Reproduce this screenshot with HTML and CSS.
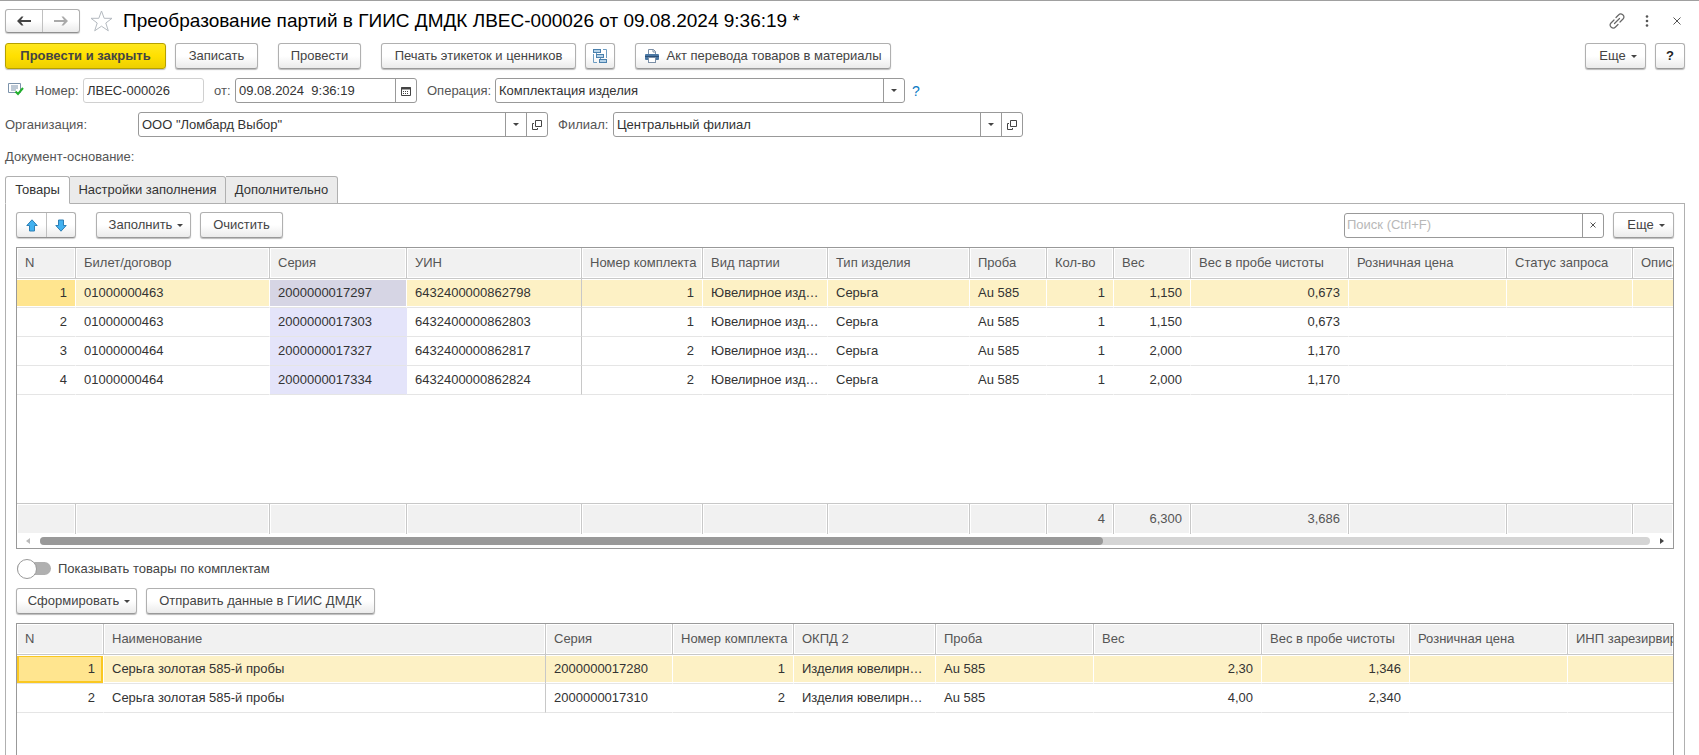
FILE: index.html
```html
<!DOCTYPE html>
<html lang="ru">
<head>
<meta charset="utf-8">
<title>Преобразование партий в ГИИС ДМДК</title>
<link rel="stylesheet" href="styles.css">
</head>
<body>
<div class="window">
  <header class="titlebar">
    <div class="pair">
      <button type="button" class="pair-btn nav" aria-label="Назад"><svg width="14" height="10" viewBox="0 0 14 10"><path d="M0 5 4.500.5H6.500L4 4H14V6H4L6.500 9.500H4.500Z" fill="#444"/></svg></button>
      <button type="button" class="pair-btn nav" aria-label="Вперед"><svg width="14" height="10" viewBox="0 0 14 10"><path d="M14 5 9.500.5H7.500L10 4H0V6H10L7.500 9.500H9.500Z" fill="#aaa"/></svg></button>
    </div>
    <button type="button" class="plain star" aria-label="В избранное"><svg width="23" height="22" viewBox="0 0 23 22"><path d="M11.500 1 14.200 8.300H22L15.800 13 18.300 20.800 11.500 16.200 4.700 20.800 7.200 13 1 8.300H8.800Z" fill="none" stroke="#b4bac0"/></svg></button>
    <h1 class="title">Преобразование партий в ГИИС ДМДК ЛВЕС-000026 от 09.08.2024 9:36:19 *</h1>
    <div class="window-tools">
      <button type="button" class="plain" aria-label="Ссылка"><svg width="16" height="16" viewBox="0 0 16 16" fill="none" stroke="#666" stroke-width="1.200" stroke-linecap="round"><path d="M5.500 10.500l5-5M7 4.500 9.500 2a2.500 2.500 0 0 1 4.500 4L11 9M9 11.500 6.500 14a2.500 2.500 0 0 1-4.500-4L5 7"/></svg></button>
      <button type="button" class="plain" aria-label="Меню"><svg width="4" height="14" viewBox="0 0 4 14" fill="#555"><circle cx="2" cy="2.500" r="1.300"/><circle cx="2" cy="7" r="1.300"/><circle cx="2" cy="11.500" r="1.300"/></svg></button>
      <button type="button" class="plain" aria-label="Закрыть"><svg width="8" height="8" viewBox="0 0 8 8"><path d="M.5.5l7 7M7.500.5l-7 7" stroke="#555"/></svg></button>
    </div>
  </header>

  <div class="commands">
    <button type="button" class="btn primary w-primary">Провести и закрыть</button>
    <button type="button" class="btn w-short">Записать</button>
    <button type="button" class="btn w-short group-start">Провести</button>
    <button type="button" class="btn w-print group-start">Печать этикеток и ценников</button>
    <button type="button" class="btn w-icon" aria-label="Структура подчиненности"><svg width="16" height="16" viewBox="0 0 16 16" fill="#b5d2e8" stroke="#4a80ad"><path d="M11 1.500h3.500V10M5 14.500H1.500V6M4.500 5v3M8.500 10v3" fill="none" stroke="#6d9cc2"/><rect x="1.500" y="1.500" width="7" height="3"/><rect x="4.500" y="6.500" width="7" height="3"/><rect x="7.500" y="11.500" width="7" height="3"/></svg></button>
    <button type="button" class="btn w-act group-start"><svg width="16" height="16" viewBox="0 0 16 16"><path d="M4.500 6.500v-5h5l2 2v3" fill="#fff" stroke="#7b8fa6"/><path d="M9 1.500V4h2.500" fill="none" stroke="#7b8fa6"/><rect x="1" y="6" width="14" height="6" rx="1" fill="#4a77a3"/><path d="M1 8.500h14" stroke="#2a4f78"/><rect x="4.500" y="9.500" width="7" height="5" fill="#fff" stroke="#7b8fa6"/></svg>Акт перевода товаров в материалы</button>
    <div class="right">
      <button type="button" class="btn drop w-more">Еще<i class="caret"></i></button>
      <button type="button" class="btn help w-icon">?</button>
    </div>
  </div>

  <div class="row">
    <svg class="state" width="16" height="14" viewBox="0 0 16 14"><path d="M.5 1.500h12v9H.5Z" fill="#fff" stroke="#7c93ab"/><path d="M3 4h7M3 6h7M3 8h5" stroke="#7c93ab"/><path d="M7.500 9.500 10 12l5-6" fill="none" stroke="#22b02c" stroke-width="2"/></svg>
    <label class="lbl lbl-number" for="num">Номер:</label>
    <span class="field readonly f-number"><input id="num" value="ЛВЕС-000026" readonly></span>
    <label class="lbl lbl-from" for="date">от:</label>
    <span class="field f-date"><input id="date" value="09.08.2024  9:36:19"><button type="button" class="cell" aria-label="Календарь"><svg width="10" height="10" viewBox="0 0 10 10"><path d="M.5 1.500h9v8h-9Z" fill="none" stroke="#444"/><path d="M0 2.500h10" stroke="#444" stroke-width="2"/><path d="M2 5.500h6M2 7.500h6" stroke="#444" stroke-dasharray="1 1"/></svg></button></span>
    <label class="lbl lbl-op" for="op">Операция:</label>
    <span class="field f-wide"><select id="op"><option>Комплектация изделия</option></select><span class="cell"><i class="caret"></i></span></span>
    <a class="hint" href="#">?</a>
  </div>

  <div class="row">
    <label class="lbl lbl-org" for="org">Организация:</label>
    <span class="field f-wide"><select id="org"><option>ООО "Ломбард Выбор"</option></select><span class="cell"><i class="caret"></i></span><button type="button" class="cell" aria-label="Открыть организацию"><svg width="10" height="10" viewBox="0 0 10 10" fill="none" stroke="#444"><path d="M3.500.5h6v6h-6ZM2 3.500H.5v6h5V8"/></svg></button></span>
    <label class="lbl lbl-branch" for="branch">Филиал:</label>
    <span class="field f-wide"><select id="branch"><option>Центральный филиал</option></select><span class="cell"><i class="caret"></i></span><button type="button" class="cell" aria-label="Открыть филиал"><svg width="10" height="10" viewBox="0 0 10 10" fill="none" stroke="#444"><path d="M3.500.5h6v6h-6ZM2 3.500H.5v6h5V8"/></svg></button></span>
  </div>

  <div class="row basis"><span class="lbl">Документ-основание:</span></div>

  <div class="tabs" role="tablist">
    <button type="button" class="tab active" role="tab" aria-selected="true">Товары</button>
    <button type="button" class="tab w-settings" role="tab">Настройки заполнения</button>
    <button type="button" class="tab w-extra" role="tab">Дополнительно</button>
  </div>

  <main class="panel">
    <div class="commands">
      <div class="pair">
        <button type="button" class="pair-btn" aria-label="Вверх"><svg width="12" height="13" viewBox="0 0 12 13"><path d="M6 .8 11.200 6.500H8.500V12h-5V6.500H.8Z" fill="#41b1f0" stroke="#2d7fb5"/></svg></button>
        <button type="button" class="pair-btn" aria-label="Вниз"><svg width="12" height="13" viewBox="0 0 12 13"><path d="M6 12.200 11.200 6.500H8.500V1h-5V6.500H.8Z" fill="#41b1f0" stroke="#2d7fb5"/></svg></button>
      </div>
      <button type="button" class="btn drop w-fill group-start">Заполнить<i class="caret"></i></button>
      <button type="button" class="btn w-short">Очистить</button>
      <div class="right">
        <span class="field f-search"><input aria-label="Поиск" placeholder="Поиск (Ctrl+F)"><button type="button" class="cell" aria-label="Очистить поиск"><svg width="6" height="6" viewBox="0 0 6 6"><path d="M.5.5l5 5M5.500.5l-5 5" stroke="#555"/></svg></button></span>
        <button type="button" class="btn drop w-more">Еще<i class="caret"></i></button>
      </div>
    </div>

    <div class="frame">
      <table class="grid goods">
        <colgroup><col class="c59"><col class="c194"><col class="c137"><col class="c175"><col class="c121"><col class="c125"><col class="c142"><col class="c77"><col class="c67"><col class="c77"><col class="c158"><col class="c158"><col class="c126"><col></colgroup>
        <thead><tr><th>N</th><th>Билет/договор</th><th>Серия</th><th>УИН</th><th>Номер комплекта</th><th>Вид партии</th><th>Тип изделия</th><th>Проба</th><th>Кол-во</th><th>Вес</th><th>Вес в пробе чистоты</th><th>Розничная цена</th><th>Статус запроса</th><th>Описание</th></tr></thead>
        <tbody>
          <tr class="selected"><td class="num current">1</td><td>01000000463</td><td class="series">2000000017297</td><td class="fixed">6432400000862798</td><td class="num">1</td><td>Ювелирное изделие</td><td>Серьга</td><td>Au 585</td><td class="num">1</td><td class="num">1,150</td><td class="num">0,673</td><td></td><td></td><td></td></tr>
          <tr><td class="num">2</td><td>01000000463</td><td class="series">2000000017303</td><td class="fixed">6432400000862803</td><td class="num">1</td><td>Ювелирное изделие</td><td>Серьга</td><td>Au 585</td><td class="num">1</td><td class="num">1,150</td><td class="num">0,673</td><td></td><td></td><td></td></tr>
          <tr><td class="num">3</td><td>01000000464</td><td class="series">2000000017327</td><td class="fixed">6432400000862817</td><td class="num">2</td><td>Ювелирное изделие</td><td>Серьга</td><td>Au 585</td><td class="num">1</td><td class="num">2,000</td><td class="num">1,170</td><td></td><td></td><td></td></tr>
          <tr><td class="num">4</td><td>01000000464</td><td class="series">2000000017334</td><td class="fixed">6432400000862824</td><td class="num">2</td><td>Ювелирное изделие</td><td>Серьга</td><td>Au 585</td><td class="num">1</td><td class="num">2,000</td><td class="num">1,170</td><td></td><td></td><td></td></tr>
          <tr class="filler"><td colspan="14"></td></tr>
        </tbody>
        <tfoot><tr><td></td><td></td><td></td><td></td><td></td><td></td><td></td><td></td><td class="num">4</td><td class="num">6,300</td><td class="num">3,686</td><td></td><td></td><td></td></tr></tfoot>
      </table>
      <div class="scrollbar">
        <i class="scroll-arrow left"></i>
        <div class="track"><div class="thumb"></div></div>
        <i class="scroll-arrow"></i>
      </div>
    </div>

    <label class="switch"><input type="checkbox" role="switch">Показывать товары по комплектам</label>

    <div class="commands second">
      <button type="button" class="btn drop w-form">Сформировать<i class="caret"></i></button>
      <button type="button" class="btn w-send">Отправить данные в ГИИС ДМДК</button>
    </div>

    <div class="frame last">
      <table class="grid">
        <colgroup><col class="c87"><col class="c442"><col class="c127"><col class="c121"><col class="c142"><col class="c158"><col class="c168"><col class="c148"><col class="c158"><col></colgroup>
        <thead><tr><th>N</th><th>Наименование</th><th>Серия</th><th>Номер комплекта</th><th>ОКПД 2</th><th>Проба</th><th>Вес</th><th>Вес в пробе чистоты</th><th>Розничная цена</th><th>ИНП зарезирвирован</th></tr></thead>
        <tbody>
          <tr class="selected"><td class="num current focused">1</td><td class="fixed">Серьга золотая 585-й пробы</td><td>2000000017280</td><td class="num">1</td><td>Изделия ювелирные и</td><td>Au 585</td><td class="num">2,30</td><td class="num">1,346</td><td></td><td></td></tr>
          <tr><td class="num">2</td><td class="fixed">Серьга золотая 585-й пробы</td><td>2000000017310</td><td class="num">2</td><td>Изделия ювелирные и</td><td>Au 585</td><td class="num">4,00</td><td class="num">2,340</td><td></td><td></td></tr>
        </tbody>
      </table>
    </div>
  </main>
</div>
</body>
</html>
```
FILE: styles.css
```css
* { box-sizing: border-box; }

body {
  margin: 0;
  background: #fff;
  color: #333;
  font: 13px/16px "Liberation Sans", Arial, sans-serif;
}

button, input, select { font: inherit; color: inherit; margin: 0; }
button { cursor: pointer; }
svg { display: block; flex: none; }

.window {
  display: flex;
  flex-direction: column;
  height: 100vh;
  overflow: hidden;
  padding: 8px 14px 0 5px;
  border-top: 1px solid #a0a0a0;
}

/* Title bar */
.titlebar { display: flex; align-items: center; height: 24px; margin-bottom: 10px; }
.title { margin: 0 0 0 10px; font-size: 19px; line-height: 24px; font-weight: normal; color: #000; white-space: nowrap; }
.plain { display: flex; align-items: center; justify-content: center; padding: 0; border: 0; background: none; }
.star { margin-left: 10px; }
.window-tools { display: flex; align-items: center; gap: 14px; margin-left: auto; }
.window-tools .plain { width: 16px; height: 24px; }

.pair {
  display: flex;
  border: 1px solid #b0b0b0;
  border-bottom-color: #909090;
  border-radius: 3px;
  background: linear-gradient(#fff 50%, #ebebeb);
  box-shadow: 0 1px 1px #ccc;
}
.pair-btn {
  display: flex;
  align-items: center;
  justify-content: center;
  width: 29px;
  height: 24px;
  padding: 0;
  border: 0;
  background: none;
}
.pair-btn.nav { width: 36px; height: 22px; }
.pair-btn + .pair-btn { border-left: 1px solid #c0c0c0; }
.pair-btn.nav + .nav { width: 37px; }

/* Command bars */
.commands { display: flex; align-items: center; gap: 9px; margin-bottom: 9px; }
.commands .right { display: flex; align-items: center; gap: 9px; margin-left: auto; }
.group-start { margin-left: 11px; }

.btn {
  display: flex;
  align-items: center;
  justify-content: center;
  height: 26px;
  padding: 0;
  border: 1px solid #b0b0b0;
  border-bottom-color: #999;
  border-radius: 3px;
  background: linear-gradient(#fff 50%, #ebebeb);
  box-shadow: 0 1px 1px #bbb;
  color: #444;
  white-space: nowrap;
}
.btn.primary { border-color: #b5a000; background: linear-gradient(#ffe71f, #ffe000 50%, #edcf00); font-weight: bold; }
.btn.help { font-weight: bold; color: #222; }
.btn.drop { gap: 5px; padding-left: 5px; }
.w-primary { width: 161px; }
.w-short { width: 83px; }
.w-print { width: 195px; }
.w-icon { width: 30px; }
.w-act { width: 256px; gap: 6px; }
.w-more { width: 61px; }
.w-fill { width: 95px; }
.w-form { width: 121px; }
.w-send { width: 229px; }

.caret { border: 3px solid transparent; border-top-color: #444; border-bottom: 0; }

/* Header fields */
.row { display: flex; align-items: center; height: 25px; margin-bottom: 9px; }
.lbl { color: #555; white-space: nowrap; }
.state { margin: 0 11px 4px 3px; }
.lbl-number { width: 48px; }
.lbl-from { width: 31px; padding-left: 10px; }
.lbl-op { width: 78px; padding-left: 10px; }
.lbl-org { width: 133px; }
.lbl-branch { width: 65px; padding-left: 10px; }
.basis { height: 22px; margin-bottom: 8px; }
.hint { margin-left: 7px; color: #0a7ac4; font-size: 14px; text-decoration: none; }

.field { display: flex; height: 25px; border: 1px solid #999; border-radius: 3px; background: #fff; }
.field.readonly { border-color: #d0d0d0; }
.field input, .field select {
  flex: 1;
  min-width: 0;
  padding: 0 3px;
  border: 0;
  outline: 0;
  background: none;
  appearance: none;
}
.field input { white-space: pre; }
.field ::placeholder { color: #b8b8b8; opacity: 1; }
.cell {
  display: flex;
  align-items: center;
  justify-content: center;
  width: 21px;
  padding: 0;
  border: 0;
  border-left: 1px solid #999;
  background: none;
}
.f-number { width: 121px; }
.f-date { width: 182px; }
.f-wide { width: 410px; }
.f-search { width: 260px; }
.f-search input { padding: 0 2px; }

/* Tabs */
.tabs { display: flex; position: relative; z-index: 1; }
.tab {
  height: 28px;
  padding: 0;
  border: 1px solid #b0b0b0;
  border-left-width: 0;
  background: #ebebeb;
  border-radius: 0 3px 0 0;
}
.tab.active { width: 65px; border-left-width: 1px; border-bottom-color: #fff; border-radius: 3px 3px 0 0; background: #fff; }
.w-settings { width: 156px; }
.w-extra { width: 112px; }

.panel {
  flex: 1;
  display: flex;
  flex-direction: column;
  min-height: 0;
  margin-top: -1px;
  padding: 8px 10px 0;
  border: 1px solid #b0b0b0;
  border-bottom: 0;
}

/* Data grids */
.frame { flex: none; overflow: hidden; border: 1px solid #999; }
.frame.last { flex: 1; border-bottom: 0; }
.grid { width: 100%; table-layout: fixed; border-collapse: separate; border-spacing: 0; }
.grid th, .grid td { overflow: hidden; padding: 0 8px; text-align: left; white-space: nowrap; }
.grid th { padding-right: 0; }
.grid th, .grid tfoot td {
  height: 31px;
  border-right: 1px solid #c8c8c8;
  background: #f1f1f1;
  box-shadow: inset 0 0 0 1px #fff;
  color: #555;
  font-weight: normal;
}
.grid th { border-bottom: 1px solid #c8c8c8; }
.grid tfoot td { border-top: 1px solid #c8c8c8; }
.grid th:last-child, .grid tr > td:last-child { border-right: 0; }
.grid tbody td { height: 29px; border-right: 1px solid transparent; border-bottom: 1px solid #e5e5e5; text-overflow: ellipsis; }
.grid .num { text-align: right; }
.grid .series { background: #e4e4fa; }
.grid .selected td { border-right-color: #fff; background: #fdf1c5; box-shadow: inset 0 1px #fff, inset 0 -1px #fff; }
.grid .selected .series { background: #d6d5e4; }
.grid .selected .current { background: #ffe58f; }
.grid .selected .focused { box-shadow: inset 0 1px #fff, inset 0 0 0 2px #fac822; }
.grid tbody .fixed, .grid .selected .fixed { border-right-color: #c8c8c8; }
.grid .filler td { height: 108px; border: 0; }

.c59 { width: 59px; }
.c67 { width: 67px; }
.c77 { width: 77px; }
.c87 { width: 87px; }
.c121 { width: 121px; }
.c125 { width: 125px; }
.c126 { width: 126px; }
.c127 { width: 127px; }
.c137 { width: 137px; }
.c142 { width: 142px; }
.c148 { width: 148px; }
.c158 { width: 158px; }
.c168 { width: 168px; }
.c175 { width: 175px; }
.c194 { width: 194px; }
.c442 { width: 442px; }

.scrollbar { display: flex; align-items: center; gap: 10px; height: 14px; padding: 0 9px; }
.track { flex: 1; height: 8px; border-radius: 4px; background: #d5d5d5; }
.thumb { width: 66%; height: 8px; border-radius: 4px; background: #999; }
.scroll-arrow { border: 3px solid transparent; border-left: 4px solid #444; border-right: 0; }
.scroll-arrow.left { border-left: 0; border-right: 4px solid #bbb; }

/* Toggle switch */
.switch { display: flex; align-items: center; gap: 7px; height: 21px; margin: 9px 0; color: #444; }
.switch input {
  display: flex;
  align-items: center;
  appearance: none;
  width: 34px;
  height: 13px;
  margin: 0 0 0 1px;
  border-radius: 7px;
  background: #b0b0b0;
}
.switch input::before {
  content: "";
  width: 18px;
  height: 18px;
  flex: none;
  border: 1px solid #999;
  border-radius: 50%;
  background: #fff;
}
.switch input:checked { justify-content: flex-end; background: #4caf50; }
```
